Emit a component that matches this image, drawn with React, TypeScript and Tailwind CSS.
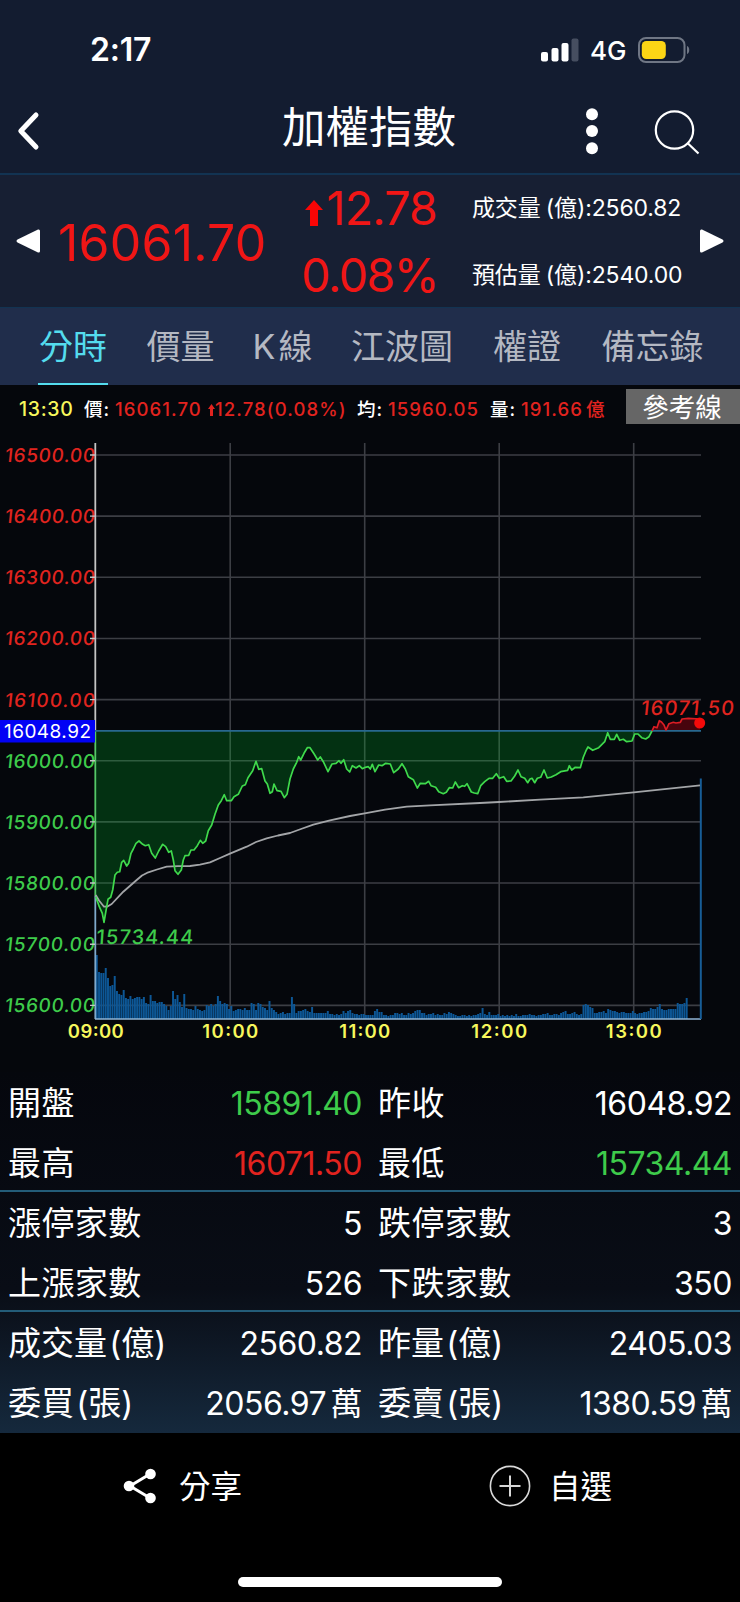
const TABS = [
  { label: "分時", box: "w-[70px]", active: true },
  { label: "價量", box: "w-[68px]" },
  { label: "K\u200a線", box: "w-[59px]" },
  { label: "江波圖", box: "w-[103px]" },
  { label: "權證", box: "w-[70px]" },
  { label: "備忘錄", box: "w-[104px]" },
];

const UP = "text-[#e2231f]";
const DOWN = "text-[#3ecb4b]";

const STATS = [
  [
    ["開盤", "15891.40", DOWN, "昨收", "16048.92", "text-white"],
    ["最高", "16071.50", UP, "最低", "15734.44", DOWN],
  ],
  [
    ["漲停家數", "5", "text-white", "跌停家數", "3", "text-white"],
    ["上漲家數", "526", "text-white", "下跌家數", "350", "text-white"],
  ],
  [
    ["成交量 (億)", "2560.82", "text-white", "昨量 (億)", "2405.03", "text-white"],
    ["委買 (張)", "2056.97 萬", "text-white", "委賣 (張)", "1380.59 萬", "text-white"],
  ],
];

// Price line while the index is below yesterday's close
const BELOW =
  "95.7,466.7 99.3,476.7 102.3,483.3 104,492.3 106.7,476.7 108,469.3 110.7,467.3 112.7,460 115,445 117.3,442.3 119.7,441.7 121.7,432.3 123.7,430.3 126.7,436 128.7,433.3 131,423.3 133.3,419 136,413.3 139,411 142.7,414.3 145.3,415.7 148.7,414.7 151.7,423.3 155.3,428 158.7,421 162.7,414.3 165.7,416.7 168.7,422.3 171.3,421 173.3,430 175,440.7 178,444.3 181.3,440 183.3,430 185,425.7 188.7,425.3 191,420 194,420 197.3,415.7 200.3,410.3 202.7,413.3 205.7,411 208.3,400.7 211.7,395 215,384.3 218.3,375 221.3,370.7 224.3,364.7 226.7,370.7 231.3,370.7 234,366.7 238.3,364.3 242.3,356 245.3,354.7 248,347.7 252.7,340.7 256,331.3 258.7,339.3 261.7,338.7 265,351 267.3,354 270,363.3 272.3,361.7 274,354 277,360.7 281,361.3 284.3,367.7 287,364.3 290,349 293.3,339 296.7,332.3 298.7,326.7 300.7,330 304,323.3 307.3,317.7 310,317.7 314.3,324.3 317.7,330 320.3,327 323.3,331.7 328,341.7 332,334 336,333.3 339,330.7 341,333.3 343.7,329.7 346.7,339 349.7,342 352.3,335.7 356,338 359.3,335.7 362.3,338.7 365.3,337.3 368.3,336.7 370.3,339 372.3,334.3 375,341.7 378.7,335 382,335.7 385.7,333.3 390.3,334 393.7,342.7 398.3,339 402,333.7 405.3,339 408.3,346.7 413.3,349.7 417.3,358 420.3,353.3 425.3,353.7 428.7,351.3 431,355.7 435.7,357.3 438.7,361.7 443.3,363.7 446.3,362.3 449.3,357.7 452.7,358 455.3,352 458.7,357.7 462.3,355.7 464.7,356.3 467,353.7 471.3,362 474.3,363 477.7,363.7 480.7,355.7 484.7,351.7 489,348.3 492.7,348.3 496.3,343.7 499.3,348.3 503.7,346.7 506.7,351.3 511,351 514.7,346 518,340 521,346.7 524.7,348.3 527.7,352.7 530,349 532,348.3 534.7,352.7 537.3,348.3 540.7,347.3 544,340 547.3,348 551.3,347 556,344.7 560.7,341.7 567.7,340.3 569.3,335.7 571.7,340 575.3,337.3 580.3,337.7 583.3,327.3 586,320.7 588,317 592.7,320.3 598.7,317.7 604.7,311.7 607.7,302.7 610.3,309.3 614.3,309.3 616.7,304.3 619.7,310.3 623.3,309.3 626.7,311.7 632,311 634.7,304 638,304 641.7,307.7 645.7,309 649,306.7 652,301";

const ABOVE =
  "652,301 654,296.7 657,297.7 659.3,290.7 661.5,292 664,295 666,300 669,293.7 673.3,292.3 676,293 680.3,292.3 682,289 688.3,288.3 700,289";

const AVERAGE =
  "95.7,465 99,470.5 104,476.7 107.5,476.5 111.7,474 123.3,461.7 136.7,450 142,445.5 148.3,442.3 157,439.5 166.7,436.7 178,436.2 190,436 200,434.6 210,432.3 220,428 230,423.7 246.7,416.7 256,412 266.7,408.3 278,405.5 290,403 301,399 313.3,394.7 330,390.3 350,386 364.7,383.3 385,379.6 406.7,376.7 430,375.3 480,373 499,372 540,369.7 583.3,367.3 633.7,362.3 700,355.3";

// One bar per minute, from 09:01
const VOLUME = [
  64, 47, 46, 46, 51, 41, 33, 34, 43, 28, 25, 24, 29, 21, 20, 23, 20, 21, 22, 22,
  20, 22, 16, 15, 24, 18, 18, 16, 17, 17, 15, 13, 9, 13, 28, 20, 24, 17, 12, 25,
  11, 10, 10, 9, 13, 10, 9, 8, 9, 14, 13, 15, 13, 15, 23, 18, 15, 16, 15, 10,
  13, 8, 9, 10, 10, 9, 11, 9, 9, 16, 15, 9, 16, 15, 12, 11, 9, 18, 11, 9,
  7, 5, 6, 7, 5, 6, 6, 22, 15, 6, 8, 8, 9, 10, 8, 7, 12, 6, 6, 6,
  6, 6, 6, 8, 5, 5, 4, 5, 4, 5, 8, 6, 8, 9, 6, 5, 5, 4, 5, 5,
  4, 4, 4, 4, 8, 10, 7, 7, 4, 4, 3, 4, 4, 6, 6, 5, 6, 4, 4, 6,
  5, 6, 8, 9, 9, 6, 6, 4, 5, 5, 6, 4, 5, 4, 4, 6, 5, 7, 6, 5,
  4, 3, 3, 4, 4, 3, 4, 3, 4, 4, 5, 6, 11, 5, 4, 7, 4, 4, 4, 5,
  3, 4, 3, 4, 3, 4, 3, 5, 3, 3, 4, 4, 4, 5, 4, 4, 3, 4, 4, 5,
  5, 6, 4, 4, 5, 5, 4, 6, 7, 8, 5, 5, 6, 7, 5, 4, 5, 14, 15, 14,
  12, 11, 6, 6, 7, 7, 8, 6, 10, 9, 8, 8, 7, 6, 7, 7, 6, 6, 6, 8,
  6, 5, 6, 6, 7, 7, 8, 11, 10, 10, 12, 15, 10, 9, 9, 10, 10, 10, 10, 16,
  15, 15, 16, 21,
];

function Clock() {
  return (
    <header className="flex h-[98px] items-center pl-[90px] pr-[49px] pt-[2px] text-white">
      <span className="grow text-[32px] font-semibold leading-none tracking-[-0.2px]">2:17</span>
      <svg className="h-6 w-[38px]" viewBox="0 0 38 24">
        <rect x="0" y="14" width="7" height="9.5" rx="2" fill="#fff" />
        <rect x="10.5" y="10" width="7" height="13.5" rx="2" fill="#fff" />
        <rect x="20.5" y="5" width="7" height="18.5" rx="2" fill="#fff" />
        <rect x="30.5" y="0.5" width="7" height="23" rx="2" fill="#464e60" />
      </svg>
      <span className="ml-[11px] w-12 pt-px text-[26px] font-medium leading-none">4G</span>
      <svg className="h-[26px] w-[53px]" viewBox="0 0 53 26">
        <rect x="1" y="1" width="45.5" height="24" rx="7" fill="none" stroke="#6f7684" strokeWidth="2" />
        <rect x="3.8" y="4" width="24" height="18" rx="4.5" fill="#fcd515" />
        <path d="M49 9c3 1 3 7 0 8z" fill="#6f7684" />
      </svg>
    </header>
  );
}

function TitleBar() {
  return (
    <div className="flex h-[77px] items-start border-b-2 border-[#123352] text-white">
      <svg className="ml-4 mt-3 h-[42px] w-6" viewBox="0 0 24 42" fill="none" stroke="#fff" strokeWidth="5">
        <path d="M20 5 4.8 21 20 37" strokeLinecap="round" strokeLinejoin="round" />
      </svg>
      <h1 className="ml-[242px] w-[176px] whitespace-nowrap pt-[7px] text-[43.5px] font-normal leading-[44px]">加權指數</h1>
      <svg className="ml-[128px] mt-[9px] h-12 w-3" viewBox="0 0 12 48" fill="#fff">
        <circle cx="6" cy="7.3" r="6" />
        <circle cx="6" cy="24" r="6" />
        <circle cx="6" cy="41.3" r="6" />
      </svg>
      <svg className="ml-14 mt-3 h-[46px] w-[48px]" viewBox="0 0 48 46" fill="none" stroke="#fff" strokeWidth="2.2">
        <circle cx="20.5" cy="20" r="18.7" />
        <path d="M33.5 33 44.5 43.5" />
      </svg>
    </div>
  );
}

function Quote() {
  return (
    <section className="flex h-[133px] items-center border-b border-[#123352] bg-[#171f33]">
      <svg className="ml-4 h-6 w-6" viewBox="0 0 24 24" fill="#fff">
        <path d="M22 .5Q24 0 24 2V22Q24 24 22 23.5L1.5 13.5Q-.5 12 1.5 10.5Z" />
      </svg>
      <div className="ml-[18px] mt-[3px] w-[246px] whitespace-nowrap text-[50px] leading-none tracking-[0.2px] text-[#f01616]">
        16061.70
      </div>
      <div className="mt-[2px] flex w-[132px] flex-col items-end gap-[20px] whitespace-nowrap text-[46.5px] leading-[47px] text-[#f01616]">
        <div className="flex items-center">
          <svg className="mr-1 mt-2 h-[26px] w-[18px]" viewBox="0 0 18 26" fill="#fa0505">
            <path d="M9 0 18 10H13V26H5V10H0Z" />
          </svg>
          <span className="-mr-px tracking-[-0.8px]">12.78</span>
        </div>
        <div className="-mr-[2px] tracking-[-1.5px]">0.08%</div>
      </div>
      <div className="ml-9 mt-px flex w-[228px] flex-col gap-[43px] whitespace-nowrap text-[23px] leading-6 tracking-[-0.15px] text-white [word-spacing:-1px]">
        <div>成交量 (億):2560.82</div>
        <div>預估量 (億):2540.00</div>
      </div>
      <svg className="h-6 w-6" viewBox="0 0 24 24" fill="#fff">
        <path d="M2 .5Q0 0 0 2V22Q0 24 2 23.5L22.5 13.5Q24.5 12 22.5 10.5Z" />
      </svg>
    </section>
  );
}

function Tabs() {
  return (
    <nav className="flex h-[77px] gap-[38.5px] bg-[#202d4b] pl-[38px]">
      {TABS.map((tab) => (
        <div
          key={tab.label}
          className={`${tab.box} flex h-full shrink-0 items-center justify-center whitespace-nowrap border-b-2 pt-[3px] text-[34px] leading-none ${
            tab.active ? "border-[#54dcee] text-[#54dcee]" : "border-transparent text-[#b4b8c2]"
          }`}
        >
          {tab.label}
        </div>
      ))}
    </nav>
  );
}

function Readout() {
  return (
    <div className="flex h-[45px] items-start whitespace-nowrap text-[18.5px] font-medium leading-[48px] tracking-[1.1px] text-white">
      <span className="ml-[19px] w-[65px] text-[19.5px] tracking-[0.7px] text-[#f7f75c]">13:30</span>
      <span className="w-[31px]">價:</span>
      <span className={`w-[93px] ${UP}`}>16061.70</span>
      <svg className="mt-[19px] h-3 w-[7px]" viewBox="0 0 7 12" fill="#e2231f">
        <path d="M3.5 0 7 5H5V12H2V5H0Z" />
      </svg>
      <span className={`w-[142px] ${UP}`}>12.78(0.08%)</span>
      <span className="w-[31px]">均:</span>
      <span className={`w-[102px] ${UP}`}>15960.05</span>
      <span className="w-[31px]">量:</span>
      <span className={`w-[105px] ${UP}`}>
        191.66<span className="ml-[3px]">億</span>
      </span>
      <button className="mt-1 h-[35px] w-[114px] bg-[#666] pr-[2px] text-[26.5px] font-normal leading-[34px] tracking-normal">
        參考線
      </button>
    </div>
  );
}

function Chart() {
  const levels = [165, 164, 163, 162, 161, 160, 159, 158, 157, 156];
  const hours = ["09:00", "10:00", "11:00", "12:00", "13:00"];
  return (
    <svg className="block h-[642px] w-full" viewBox="0 0 740 642">
      <g stroke="#3c3e44" strokeWidth="1.6">
        {levels.map((v, i) => (
          <path key={v} d={`M95 ${25 + i * 61.15}H701`} />
        ))}
        {hours.slice(1).map((h, i) => (
          <path key={h} d={`M${230.2 + i * 134.5} 13V589`} />
        ))}
      </g>
      <polygon points={`95.7,301 ${BELOW}`} fill="#00c828" fillOpacity="0.22" />
      <polygon points={ABOVE + " 700,301"} fill="#e00010" fillOpacity="0.3" />
      <g fill="#0d5796">
        {VOLUME.map((h, i) => (
          <rect key={i} x={95.8 + i * 2.243} y={589 - h} width="1.95" height={h} />
        ))}
      </g>
      <path d="M95.3 13V301" stroke="#c4c4c4" strokeWidth="1.8" />
      <path d="M95.3 301V466" stroke="#55c868" strokeWidth="1.8" />
      <path d="M95.3 466V589" stroke="#7fa9cc" strokeWidth="1.8" />
      <path d="M95 589H701" stroke="#8fb4d4" strokeWidth="1.6" />
      <path d="M700.8 348.5V589" stroke="#175d97" strokeWidth="2" />
      <path d="M95 300.8H701" stroke="#28688f" strokeWidth="1.7" />
      <polyline points={AVERAGE} fill="none" stroke="#a3a5a8" strokeWidth="1.8" strokeLinejoin="round" />
      <polyline points={BELOW} fill="none" stroke="#3fd94c" strokeWidth="1.7" strokeLinejoin="round" />
      <polyline points={ABOVE} fill="none" stroke="#dc1d24" strokeWidth="1.7" strokeLinejoin="round" />
      <circle cx="699.7" cy="293" r="5.5" fill="#f50a0a" />
      <g fontSize="19" fontWeight="500">
        {levels.map((v, i) => (
          <text
            key={v}
            transform={`translate(4.5 ${32 + i * 61.15}) skewX(-6)`}
            textLength="90"
            fill={v > 160 ? "#e0241f" : "#3ecb4b"}
          >
            {v}00.00
          </text>
        ))}
        <text transform="translate(96 513.5) skewX(-4)" textLength="97" fontSize="20" fill="#3ecb4b">
          15734.44
        </text>
        <text transform="translate(640.5 284.5) skewX(-6)" textLength="93" fontSize="20" fill="#e0241f">
          16071.50
        </text>
      </g>
      <path d={levels.map((_, i) => `M90 ${25 + i * 61.15}h5`).join("")} stroke="#c4c4c4" strokeWidth="1.4" />
      <rect y="290" width="95" height="22.5" fill="#0202f5" />
      <text x="4" y="308" textLength="87" fontSize="19" fill="#fff">16048.92</text>
      <g fontSize="18.5" fontWeight="600" fill="#f7f75c" textAnchor="middle">
        {hours.map((h, i) => (
          <text key={h} x={95.8 + i * 134.5} y="607.5" textLength={i === 2 ? 51 : 56}>
            {h}
          </text>
        ))}
      </g>
    </svg>
  );
}

function Stats() {
  return (
    <section className="h-[361px] bg-linear-to-b from-[#05070d] via-[#090d16] via-60% to-[#15293d] text-[33px] text-white">
      {STATS.map((group, i) => (
        <div key={i} className={i < 2 ? "h-[120px] border-b-2 border-[#235c78]" : "h-[121px]"}>
          {group.map(([label, value, color, label2, value2, color2], j) => (
            <div key={j} className="flex h-[60px] items-center whitespace-nowrap pt-[3px]">
              <span className={`w-[170px] pl-2 [word-spacing:-7px] ${i < 2 ? "tracking-[0.4px]" : ""}`}>{label}</span>
              <span className={`w-[192px] text-right text-[32px] tracking-[-0.5px] [word-spacing:-4px] ${color}`}>{value}</span>
              <span className={`w-[170px] pl-4 [word-spacing:-7px] ${i < 2 ? "tracking-[0.4px]" : ""}`}>{label2}</span>
              <span className={`w-[200px] text-right text-[32px] tracking-[-0.5px] [word-spacing:-4px] ${color2}`}>{value2}</span>
            </div>
          ))}
        </div>
      ))}
    </section>
  );
}

function Footer() {
  return (
    <footer className="flex h-[169px] flex-col items-center bg-black text-white">
      <div className="flex h-[106px] w-full items-center text-[31.5px] leading-none">
        <svg className="ml-[123px] h-9 w-[34px]" viewBox="0 0 34 36" fill="#fff">
          <path d="M27 6 7 18 27 30" fill="none" stroke="#fff" strokeWidth="3" />
          <circle cx="6" cy="18" r="5.3" />
          <circle cx="27.5" cy="6" r="5.3" />
          <circle cx="27.5" cy="30" r="5.3" />
        </svg>
        <span className="ml-[22px] w-[310px] pt-[2px]">分享</span>
        <svg className="h-[42px] w-[42px]" viewBox="0 0 42 42" fill="none" stroke="#d8d8d8" strokeWidth="1.6">
          <circle cx="21" cy="21" r="19.6" />
          <path d="M21 10.5v21M10.5 21h21" strokeWidth="2" />
        </svg>
        <span className="ml-[18px] pt-[2px]">自選</span>
      </div>
      <div className="mt-[38px] h-[10px] w-[264px] rounded-full bg-white" />
    </footer>
  );
}

export default function App() {
  return (
    <div className="w-[740px] bg-[#05070c] font-['Inter','Noto_Sans_CJK_TC',sans-serif]">
      <div className="bg-[#131c30]">
        <Clock />
        <TitleBar />
      </div>
      <Quote />
      <Tabs />
      <Readout />
      <Chart />
      <Stats />
      <Footer />
    </div>
  );
}
